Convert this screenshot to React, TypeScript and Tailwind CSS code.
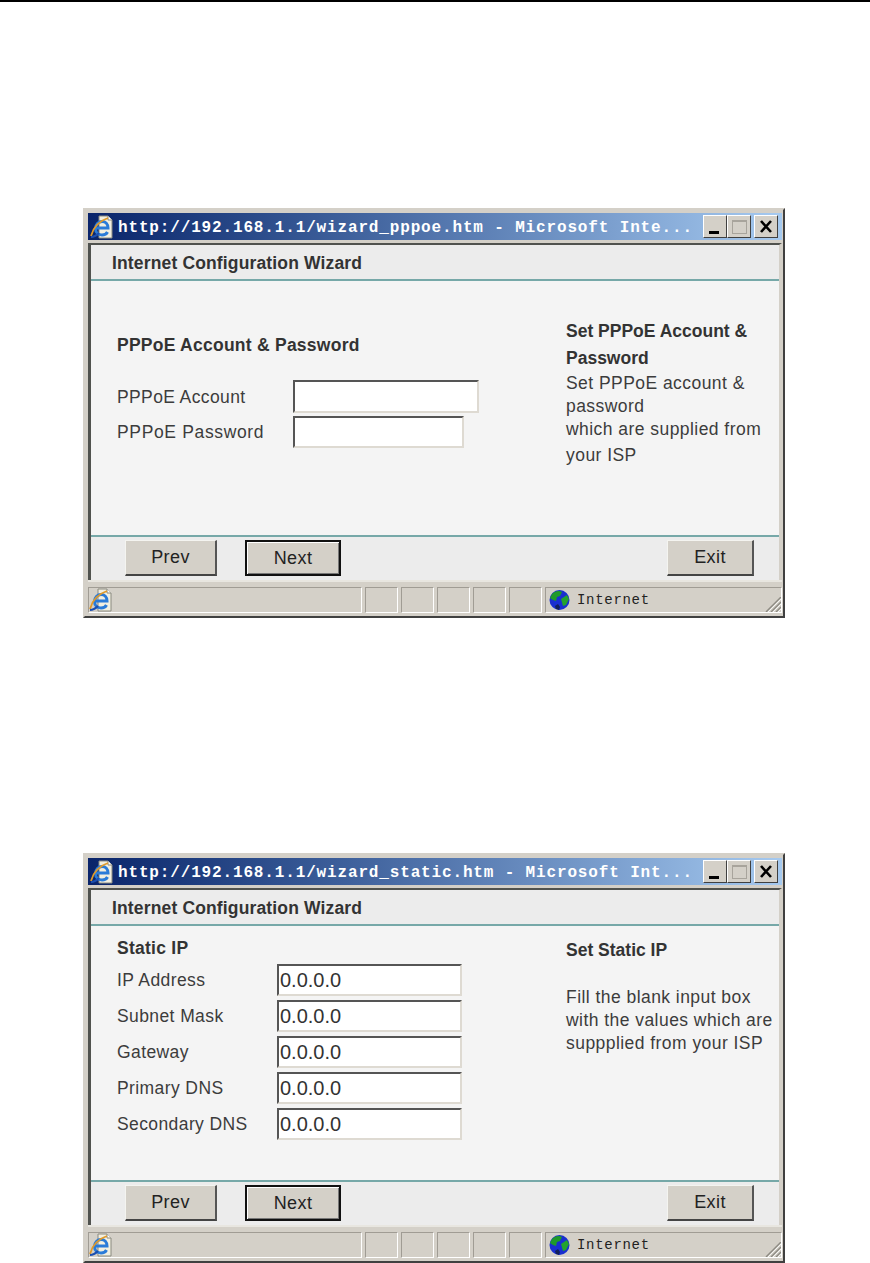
import React from 'react';

const SANS = "font-['Liberation_Sans',Arial,sans-serif]";

const IeIcon = () => (
  <svg width="24" height="24" viewBox="0 0 24 24" className="shrink-0">
    <path d="M9 1h9l4 4v18H9z" fill="#f2efe0" stroke="#8a8a80" strokeWidth="1" />
    <path d="M18 1v4h4" fill="#fff" stroke="#8a8a80" strokeWidth="1" />
    <path d="M6 13h12c0-4-2.5-6.5-6-6.5s-6.5 3-6.5 7 3 6.5 6.5 6.5c2.5 0 4.5-1 5.5-3" fill="none" stroke="#2a7bd8" strokeWidth="3" />
    <path d="M1 21C3 13 9 6 18 3" fill="none" stroke="#e09a2a" strokeWidth="1.8" />
    <path d="M1 22c3 0 6-2 8-4" fill="none" stroke="#1c4fb0" strokeWidth="2" />
  </svg>
);

const Globe = () => (
  <svg width="21" height="22" viewBox="0 0 21 22" className="shrink-0">
    <circle cx="10.5" cy="11" r="10" fill="#1a2fd0" />
    <path d="M3 5c3-3 7-4 10-2l-2 4-3 1-1 4-3-1-3-2z" fill="#1f9a2a" />
    <path d="M12 10l6-4 2 4-3 6-3 1z" fill="#23a32e" />
    <path d="M6 17l3-2 2 3-1 3-3-1z" fill="#12205c" />
  </svg>
);

const SizeGrip = () => (
  <svg width="16" height="15" viewBox="0 0 16 15" className="ml-auto shrink-0 self-end">
    <path d="M1 15L16 0M6 15L16 5M11 15l5-5" stroke="#8d8a82" strokeWidth="1.4" />
    <path d="M3 15L16 2M8 15l8-8M13 15l3-3" stroke="#fff" strokeWidth="0.8" />
  </svg>
);

const CaptionButton = ({ children }: { children: React.ReactNode }) => (
  <div className="flex h-[23px] w-[24px] items-center justify-center bg-[#d4d0c8] border border-t-white border-l-white border-r-[#404040] border-b-[#404040]">
    {children}
  </div>
);

const WizardButton = ({ label, width, active }: { label: string; width: string; active?: boolean }) => (
  <button
    className={`h-[36px] bg-[#d4d0c8] text-[18px] tracking-[0.4px] text-[#222] ${width} ${SANS} ${
      active
        ? 'border-2 border-[#111] shadow-[inset_1px_1px_0_#fff,inset_-1px_-1px_0_#777]'
        : 'border border-t-[#f4f4f0] border-l-[#f4f4f0] border-r-[#555] border-b-[#444] border-b-2 border-r-2'
    }`}
  >
    {label}
  </button>
);

const SunkenCell = () => (
  <div className="h-[26px] w-[33px] border border-t-[#a09c94] border-l-[#a09c94] border-r-white border-b-white" />
);

const InputBox = ({ className, value }: { className: string; value?: string }) => (
  <div
    className={`bg-white border-2 border-t-[#555] border-l-[#555] border-r-[#dedad2] border-b-[#dedad2] pl-[1px] text-[20px] leading-[28px] text-[#333] ${className}`}
  >
    {value}
  </div>
);

interface WizardWindowProps {
  title: string;
  children: React.ReactNode;
}

const WizardWindow: React.FC<WizardWindowProps> = ({ title, children }) => (
  <div className="ml-[83px] w-[702px] h-[410px] flex flex-col bg-[#d4d0c8] border-2 border-t-[#d4d0c8] border-l-[#d4d0c8] border-r-[#404040] border-b-[#404040] pt-[3px] pl-[3px] pr-[1px] pb-[3px]">
    {/* title bar */}
    <div className="h-[27px] shrink-0 flex items-center pl-[2px] pr-[4px] bg-gradient-to-r from-[#0a246a] to-[#a6caf0]">
      <IeIcon />
      <div className="ml-[4px] pt-[2px] flex-1 whitespace-nowrap font-['Liberation_Mono',monospace] font-bold text-[16px] tracking-[0.85px] text-white">
        {title}
      </div>
      <div className="flex">
        <CaptionButton>
          <div className="mt-[12px] mr-[2px] h-[3px] w-[10px] bg-black" />
        </CaptionButton>
        <CaptionButton>
          <div className="h-[14px] w-[15px] border border-[#a8a49c] border-t-2" />
        </CaptionButton>
        <div className="ml-[3px]">
          <CaptionButton>
            <svg width="14" height="13" viewBox="0 0 14 13">
              <path d="M2 1l10 11M12 1L2 12" stroke="#000" strokeWidth="2.6" />
            </svg>
          </CaptionButton>
        </div>
      </div>
    </div>

    {/* page */}
    <div className={`h-[340px] shrink-0 pt-[3px] bg-[#d4d0c8] ${SANS}`}>
      <div className="h-[337px] flex flex-col bg-[#ececec] border-t-2 border-l-[3px] border-r-[3px] border-t-[#50524e] border-l-[#50524e] border-r-[#d4d0c8]">
        <div className="h-[36px] shrink-0 flex items-center pl-[21px] pt-[3px] font-bold text-[17.5px] tracking-[0.15px] text-[#333] border-b-2 border-[#76a8a8]">
          Internet Configuration Wizard
        </div>
        <div className="h-[256px] shrink-0 flex bg-[#f4f4f4] border-b-2 border-[#76a8a8]">{children}</div>
        <div className="flex-1 flex pt-[3px] pl-[34px] pr-[25px]">
          <WizardButton label="Prev" width="w-[92px]" />
          <div className="ml-[28px]">
            <WizardButton label="Next" width="w-[96px]" active />
          </div>
          <div className="ml-auto">
            <WizardButton label="Exit" width="w-[87px]" />
          </div>
        </div>
      </div>
    </div>

    {/* status bar */}
    <div className="flex-1 flex items-end gap-[3px] border-t-2 border-[#e8e6e0]">
      <div className="flex-1 h-[26px] flex items-center border border-t-[#a09c94] border-l-[#a09c94] border-r-white border-b-white">
        <IeIcon />
      </div>
      <SunkenCell />
      <SunkenCell />
      <SunkenCell />
      <SunkenCell />
      <SunkenCell />
      <div className="w-[237px] h-[26px] flex items-center pl-[3px] border border-t-[#a09c94] border-l-[#a09c94] border-r-white border-b-white">
        <Globe />
        <span className="ml-[7px] font-['Liberation_Mono',monospace] text-[14px] tracking-[0.7px] text-[#222]">Internet</span>
        <SizeGrip />
      </div>
    </div>
  </div>
);

const PppoeBody = () => (
  <>
    <div className="w-[475px] pl-[26px] pt-[51px]">
      <div className="font-bold text-[17.5px] tracking-[0.25px] text-[#333]">PPPoE Account &amp; Password</div>
      <div className="mt-[22px] flex flex-col gap-[3px] text-[17.5px] tracking-[0.38px] text-[#3c3c3c]">
        <div className="flex items-center">
          <div className="w-[176px]">PPPoE Account</div>
          <InputBox className="h-[33px] w-[186px]" />
        </div>
        <div className="flex items-center">
          <div className="w-[176px] tracking-[0.65px]">PPPoE Password</div>
          <InputBox className="h-[32px] w-[171px]" />
        </div>
      </div>
    </div>
    <div className="flex-1 pt-[37px] text-[#3c3c3c] text-[17.5px] tracking-[0.45px]">
      <div className="font-bold text-[#333] tracking-normal leading-[27px]">
        Set PPPoE Account &amp;
        <br />
        Password
      </div>
      <div className="leading-[23px]">
        Set PPPoE account &amp;
        <br />
        password
        <br />
        which are supplied from
        <br />
        <span className="inline-block mt-[3px]">your ISP</span>
      </div>
    </div>
  </>
);

const StaticBody = () => {
  const rows = ['IP Address', 'Subnet Mask', 'Gateway', 'Primary DNS', 'Secondary DNS'];
  return (
    <>
      <div className="w-[475px] pl-[26px] pt-[9px]">
        <div className="font-bold text-[17.5px] tracking-[0.25px] text-[#333]">Static IP</div>
        <div className="mt-[3px] grid grid-cols-[160px_185px] gap-y-[4px] items-center text-[17.5px] tracking-[0.4px] text-[#3c3c3c]">
          {rows.map((r) => (
            <React.Fragment key={r}>
              <div>{r}</div>
              <InputBox className="h-[32px] w-[185px] tracking-normal" value="0.0.0.0" />
            </React.Fragment>
          ))}
        </div>
      </div>
      <div className="flex-1 pt-[13px] text-[#3c3c3c] text-[17.5px] leading-[23px] tracking-[0.45px]">
        <div className="font-bold text-[#333] tracking-normal">Set Static IP</div>
        <div className="mt-[24px]">
          Fill the blank input box
          <br />
          with the values which are
          <br />
          suppplied from your ISP
        </div>
      </div>
    </>
  );
};

export default function App() {
  return (
    <div className="w-[870px] h-[1263px] bg-white overflow-hidden">
      <div className="h-[2px] bg-black" />
      <div className="pt-[206px] flex flex-col gap-[235px]">
        <WizardWindow title="http://192.168.1.1/wizard_pppoe.htm - Microsoft Inte...">
          <PppoeBody />
        </WizardWindow>
        <WizardWindow title="http://192.168.1.1/wizard_static.htm - Microsoft Int...">
          <StaticBody />
        </WizardWindow>
      </div>
    </div>
  );
}
